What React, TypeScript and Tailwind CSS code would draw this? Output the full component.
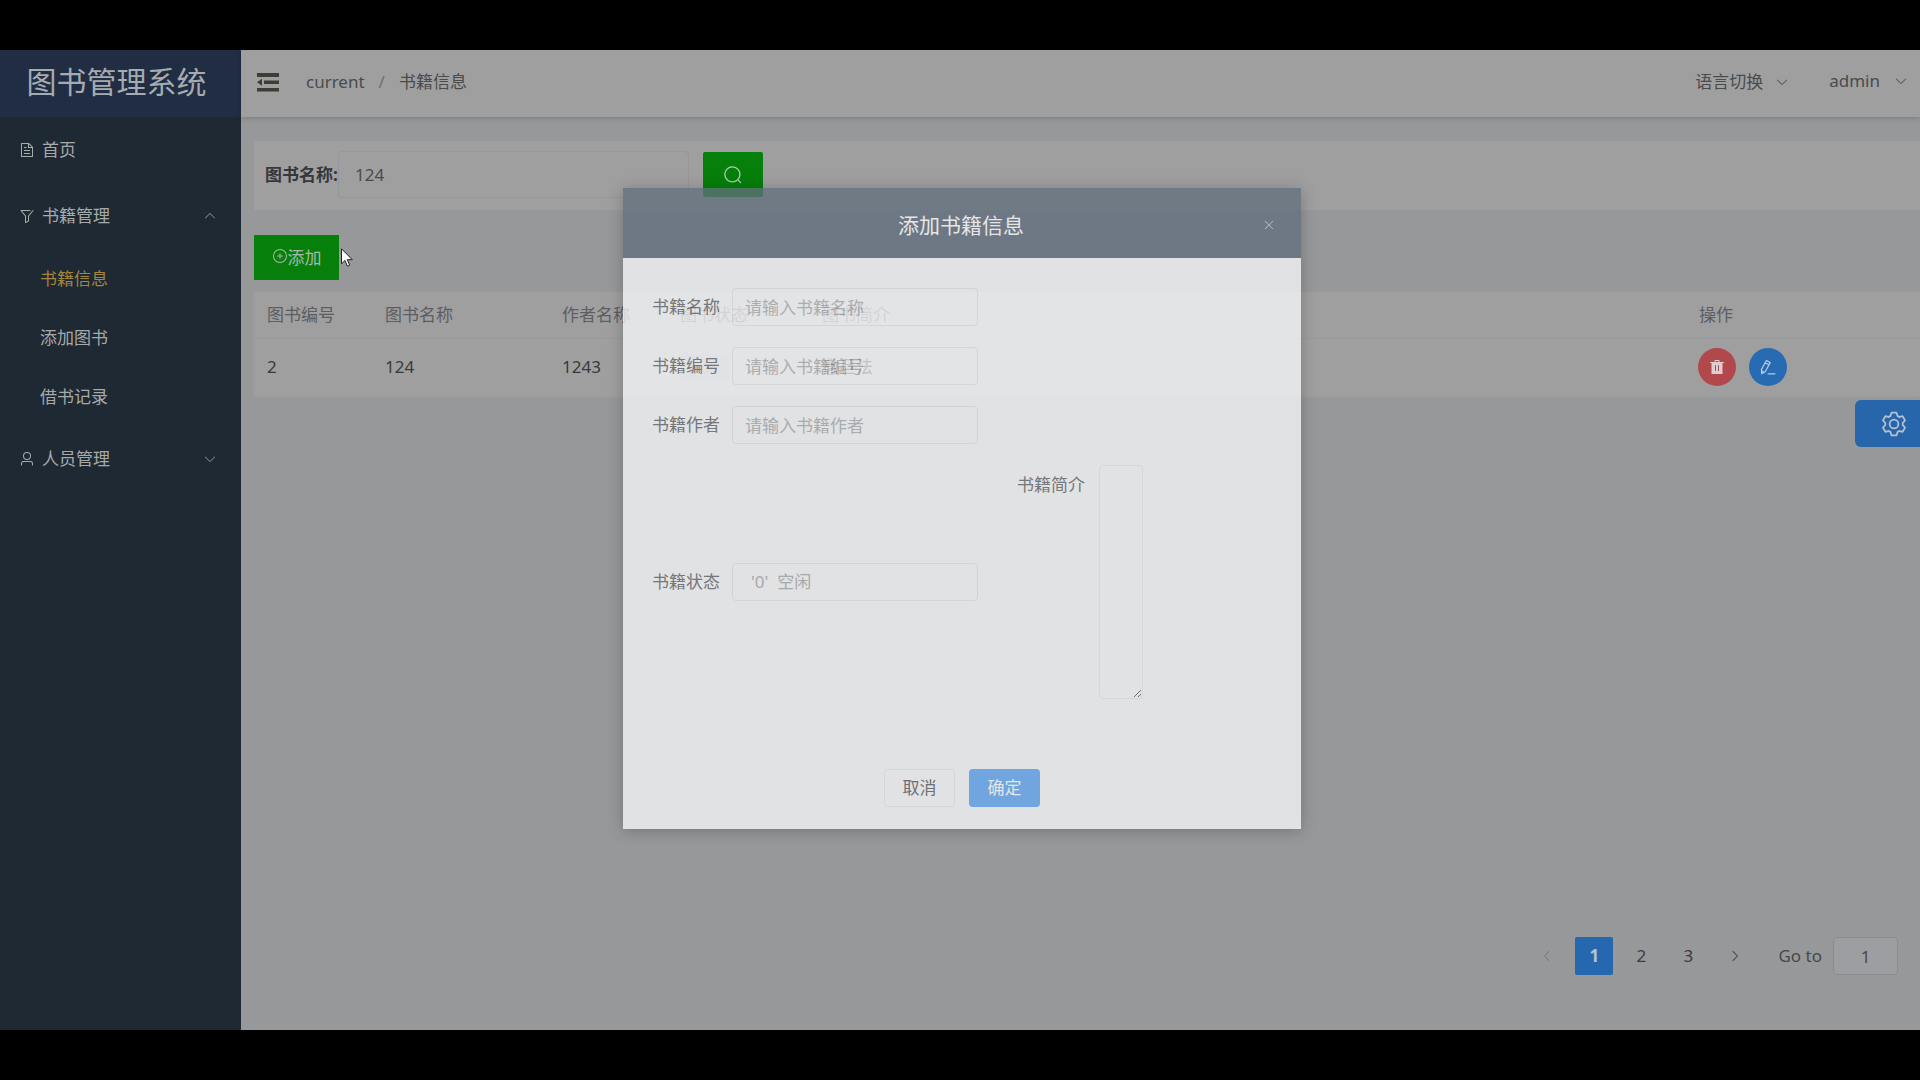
import type { ReactNode } from "react";

const FONT = "font-['Noto_Sans','Noto_Sans_CJK_SC',sans-serif]";

function Glyph({ d, className }: { d: string; className: string }) {
  return (
    <svg viewBox="0 0 1024 1024" fill="currentColor" className={className} aria-hidden="true">
      <path d={d} />
    </svg>
  );
}

const ICONS = {
  search:
    "m795.904 750.72 124.992 124.928a32 32 0 0 1-45.248 45.248L750.656 795.904a416 416 0 1 1 45.248-45.248zM480 832a352 352 0 1 0 0-704 352 352 0 0 0 0 704z",
  down: "M831.872 340.864 512 652.672 192.128 340.864a30.592 30.592 0 0 0-42.752 0 29.12 29.12 0 0 0 0 41.6L489.664 714.24a32 32 0 0 0 44.672 0l340.288-331.712a29.12 29.12 0 0 0 0-41.728 30.592 30.592 0 0 0-42.752 0z",
  document:
    "M832 384H576V128H192v768h640V384zm-26.496-64L640 154.496V320h165.504zM160 64h480l256 256v608a32 32 0 0 1-32 32H160a32 32 0 0 1-32-32V96a32 32 0 0 1 32-32zm160 448h384v64H320v-64zm0-192h160v64H320v-64zm0 384h384v64H320v-64z",
  filter:
    "M384 523.392V928a32 32 0 0 0 46.336 28.608l192-96A32 32 0 0 0 640 832V523.392l280.768-343.104a32 32 0 1 0-49.536-40.576l-288 352A32 32 0 0 0 576 512v300.224l-128 64V512a32 32 0 0 0-7.232-20.288L195.52 192H704a32 32 0 1 0 0-64H128a32 32 0 0 0-24.768 52.288L384 523.392z",
  user: "M512 512a192 192 0 1 0 0-384 192 192 0 0 0 0 384zm0 64a256 256 0 1 1 0-512 256 256 0 0 1 0 512zm320 320v-96a96 96 0 0 0-96-96H288a96 96 0 0 0-96 96v96a32 32 0 1 1-64 0v-96a160 160 0 0 1 160-160h448a160 160 0 0 1 160 160v96a32 32 0 1 1-64 0z",
  setting:
    "M600.704 64a32 32 0 0 1 30.464 22.208l35.2 109.376c14.784 7.232 28.928 15.36 42.432 24.512l112.384-24.192a32 32 0 0 1 34.432 15.36L944.32 364.8a32 32 0 0 1-4.032 37.504l-77.12 85.12a357.12 357.12 0 0 1 0 49.024l77.12 85.248a32 32 0 0 1 4.032 37.504l-88.704 153.6a32 32 0 0 1-34.432 15.296L708.8 803.904c-13.44 9.088-27.648 17.28-42.368 24.512l-35.264 109.376A32 32 0 0 1 600.704 960H423.296a32 32 0 0 1-30.464-22.208L357.696 828.48a351.616 351.616 0 0 1-42.56-24.64l-112.32 24.256a32 32 0 0 1-34.432-15.36L79.68 659.2a32 32 0 0 1 4.032-37.504l77.12-85.248a357.12 357.12 0 0 1 0-48.896l-77.12-85.248A32 32 0 0 1 79.68 364.8l88.704-153.6a32 32 0 0 1 34.432-15.296l112.32 24.256c13.568-9.152 27.776-17.408 42.56-24.64l35.2-109.312A32 32 0 0 1 423.232 64H600.64zm-23.424 64H446.72l-36.352 113.088-24.512 11.968a294.113 294.113 0 0 0-34.816 20.096l-22.656 15.36-116.224-25.088-65.28 113.152 79.68 88.192-1.92 27.136a293.12 293.12 0 0 0 0 40.192l1.92 27.136-79.808 88.192 65.344 113.152 116.224-25.024 22.656 15.296a294.113 294.113 0 0 0 34.816 20.096l24.512 11.968L446.72 896h130.688l36.48-113.152 24.448-11.904a288.282 288.282 0 0 0 34.752-20.096l22.592-15.296 116.288 25.024 65.28-113.152-79.744-88.192 1.92-27.136a293.12 293.12 0 0 0 0-40.256l-1.92-27.136 79.808-88.128-65.344-113.152-116.288 24.96-22.592-15.232a287.616 287.616 0 0 0-34.752-20.096l-24.448-11.904L577.344 128zM512 320a192 192 0 1 1 0 384 192 192 0 0 1 0-384zm0 64a128 128 0 1 0 0 256 128 128 0 0 0 0-256z",
  plus: "M352 480h320a32 32 0 1 1 0 64H352a32 32 0 0 1 0-64zM480 672V352a32 32 0 1 1 64 0v320a32 32 0 0 1-64 0zM512 896a384 384 0 1 0 0-768 384 384 0 0 0 0 768zm0 64a448 448 0 1 1 0-896 448 448 0 0 1 0 896z",
  trash:
    "M352 192V95.936a32 32 0 0 1 32-32h256a32 32 0 0 1 32 32V192h256a32 32 0 1 1 0 64H96a32 32 0 0 1 0-64h256zm64 0h192v-64H416v64zM192 960a32 32 0 0 1-32-32V256h704v672a32 32 0 0 1-32 32H192zm224-192a32 32 0 0 0 32-32V416a32 32 0 0 0-64 0v320a32 32 0 0 0 32 32zm192 0a32 32 0 0 0 32-32V416a32 32 0 0 0-64 0v320a32 32 0 0 0 32 32z",
  close:
    "M764.288 214.592 512 466.88 259.712 214.592a31.936 31.936 0 0 0-45.12 45.12L466.752 512 214.528 764.224a31.936 31.936 0 1 0 45.12 45.184L512 557.184l252.288 252.288a31.936 31.936 0 0 0 45.12-45.12L557.12 512.064l252.288-252.352a31.936 31.936 0 1 0-45.12-45.184z",
};

function EditIcon() {
  return (
    <svg viewBox="0 0 16 16" fill="none" stroke="currentColor" strokeWidth="1.2" strokeLinejoin="round" strokeLinecap="round" className="size-4" aria-hidden="true">
      <path d="M1.400 10.600 6.400 1.500l3.800 2.100-5 9.100-3.500 2.100z M5.200 3.700l3.800 2.100 M1.500 11.400l2.400 2.100 M8 14.800h7" />
    </svg>
  );
}

function MenuItem({ icon, label, arrow }: { icon: string; label: string; arrow?: "up" | "down" }) {
  return (
    <button type="button" className="flex h-[66px] w-full items-center gap-[7px] pr-6 pl-[19px] text-left text-[#a6aaa9]">
      <Glyph d={icon} className="size-4" />
      <span className="flex-1">{label}</span>
      {arrow === "up" && <Glyph d={ICONS.down} className="size-3.5 rotate-180 text-[#8b9299]" />}
      {arrow === "down" && <Glyph d={ICONS.down} className="size-3.5 text-[#8b9299]" />}
    </button>
  );
}

function SubItem({ label, active }: { label: string; active?: boolean }) {
  return (
    <a href="#" className={active ? "flex h-[59px] items-center pl-10 text-[#a3853b]" : "flex h-[59px] items-center pl-10 text-[#a6aaa9]"}>
      {label}
    </a>
  );
}

function Sidebar() {
  return (
    <aside className="w-[241px] shrink-0 bg-[#1e2934]">
      <h1 className="flex h-[67px] items-center justify-center bg-[#202d43] pr-2 pb-1 text-[30px] text-[#a5abb0]">图书管理系统</h1>
      <nav>
        <MenuItem icon={ICONS.document} label="首页" />
        <MenuItem icon={ICONS.filter} label="书籍管理" arrow="up" />
        <SubItem label="书籍信息" active />
        <SubItem label="添加图书" />
        <SubItem label="借书记录" />
        <MenuItem icon={ICONS.user} label="人员管理" arrow="down" />
      </nav>
    </aside>
  );
}

function TopBar() {
  return (
    <header className="z-10 flex h-[67px] shrink-0 items-center bg-[#9f9fa0] pr-3 pb-1 pl-4 text-[#4a4b4d] shadow-[0_1px_5px_rgba(0,0,0,0.2)]">
      <button type="button" aria-label="折叠菜单" className="text-[#3c3d35]">
        <svg viewBox="0 0 22 20" fill="currentColor" className="h-5 w-[22px]" aria-hidden="true">
          <path d="M0 1h22v4H0z M7 8.500h15v3.500H7z M0 16h22v3.500H0z M0 10.200l5-3.500v7z" />
        </svg>
      </button>
      <nav className="ml-[27px] flex flex-1 items-center">
        <a href="#">current</a>
        <span className="mx-3.5 text-[#6d6f74]">/</span>
        <span>书籍信息</span>
      </nav>
      <button type="button" className="flex items-center gap-3">
        语言切换
        <Glyph d={ICONS.down} className="size-3.5" />
      </button>
      <button type="button" className="ml-10 flex items-center gap-3.5 pb-0.5">
        admin
        <Glyph d={ICONS.down} className="size-3.5" />
      </button>
    </header>
  );
}

function BookTable() {
  return (
    <table className="w-full table-fixed border-collapse bg-[#9f9fa0] text-left shadow-[0_1px_4px_rgba(255,255,255,0.06)]">
      <colgroup>
        <col className="w-[118px]" />
        <col className="w-[177px]" />
        <col className="w-[118px]" />
        <col className="w-[142px]" />
        <col />
        <col className="w-[234px]" />
      </colgroup>
      <thead>
        <tr className="h-[46px] border-b border-[#999a9b] text-[#5b5d60]">
          {["图书编号", "图书名称", "作者名称", "图书状态", "图书简介", "操作"].map((h) => (
            <th key={h} scope="col" className="px-[13px] font-normal">{h}</th>
          ))}
        </tr>
      </thead>
      <tbody>
        <tr className="h-[58px] text-[#38393b]">
          <td className="px-[13px]">2</td>
          <td className="px-[13px]">124</td>
          <td className="px-[13px]">1243</td>
          <td className="px-[13px]">
            <span className="rounded bg-[#959aa0] px-3 py-1 text-sm text-[#7d858e]">null</span>
          </td>
          <td className="px-[13px] text-[#151617]">撒旦法</td>
          <td className="px-3">
            <div className="flex gap-[13px]">
              <button type="button" aria-label="删除" className="flex size-[38px] items-center justify-center rounded-full bg-[#b2484b] text-[#dccdce]">
                <Glyph d={ICONS.trash} className="size-4" />
              </button>
              <button type="button" aria-label="编辑" className="flex size-[38px] items-center justify-center rounded-full bg-[#276bb3] text-[#b7c9dc]">
                <EditIcon />
              </button>
            </div>
          </td>
        </tr>
      </tbody>
    </table>
  );
}

function Pagination() {
  return (
    <nav className="mt-auto mr-[22px] mb-[55px] flex items-center justify-end text-[#3b3c3f]">
      <button type="button" aria-label="上一页" className="flex size-[38px] items-center justify-center text-[#77797c]">
        <Glyph d={ICONS.down} className="size-3.5 rotate-90" />
      </button>
      <button type="button" className="mx-[9px] size-[38px] rounded-xs bg-[#2668b0] font-bold text-[#b5c3d2]">1</button>
      <button type="button" className="size-[38px]">2</button>
      <button type="button" className="mx-[9px] size-[38px]">3</button>
      <button type="button" aria-label="下一页" className="flex size-[38px] items-center justify-center">
        <Glyph d={ICONS.down} className="size-3.5 -rotate-90" />
      </button>
      <label htmlFor="goto" className="mr-[11px] ml-6 text-[#47484b]">Go to</label>
      <input id="goto" defaultValue="1" className="h-[38px] w-[65px] rounded border border-[#898b8f] bg-[#9d9ea1] text-center text-[#47484b]" />
    </nav>
  );
}

function Field({ id, label, children }: { id: string; label: string; children: ReactNode }) {
  return (
    <div className="flex items-center">
      <label htmlFor={id} className="w-[80px] text-[#6a6c70]">{label}</label>
      {children}
    </div>
  );
}

const INPUT = "h-[38px] w-[246px] rounded border border-[#e6e7e9] bg-transparent px-3 placeholder-[#b0b2b5]";

function BookDialog() {
  return (
    <div className="absolute inset-x-0 top-[188px] flex justify-center pl-1">
      <section role="dialog" aria-labelledby="dialog-title" className="w-[678px] opacity-75 shadow-[0_2px_14px_rgba(0,0,0,0.3)]">
        <header className="flex h-[70px] items-center bg-[#606e7d] px-[25px] pt-1">
          <h2 id="dialog-title" className="flex-1 pl-3 text-center text-[21px] text-white">添加书籍信息</h2>
          <button type="button" aria-label="关闭" className="text-[#c3c8cf]">
            <Glyph d={ICONS.close} className="size-3.5" />
          </button>
        </header>
        <form className="bg-[#fafbfc] px-[29px] pt-[30px] pb-[22px]">
          <div className="flex flex-col gap-[21px]">
            <Field id="book-name" label="书籍名称">
              <input id="book-name" placeholder="请输入书籍名称" className={INPUT} />
            </Field>
            <Field id="book-no" label="书籍编号">
              <input id="book-no" placeholder="请输入书籍编号" className={INPUT} />
            </Field>
            <Field id="book-author" label="书籍作者">
              <input id="book-author" placeholder="请输入书籍作者" className={INPUT} />
            </Field>
            <div className="flex items-center">
              <Field id="book-state" label="书籍状态">
                <select id="book-state" className="h-[38px] w-[246px] appearance-none rounded border border-[#e6e7e9] bg-transparent px-[18px] text-[#acaeb1]">
                  <option>'0'&nbsp; 空闲</option>
                </select>
              </Field>
              <div className="ml-[39px] flex items-start">
                <label htmlFor="book-intro" className="w-[82px] pt-2 text-[#6a6c70]">书籍简介</label>
                <textarea id="book-intro" className="h-[234px] w-[44px] resize rounded border border-[#ebecee] bg-transparent" />
              </div>
            </div>
          </div>
          <div className="mt-[70px] flex justify-center gap-3.5">
            <button type="button" className="h-[38px] w-[71px] rounded border border-[#e9eaec] text-[#606266]">取消</button>
            <button type="button" className="h-[38px] w-[71px] rounded bg-[#64aaf6] text-white">确定</button>
          </div>
        </form>
      </section>
    </div>
  );
}

export default function App() {
  return (
    <div className={`relative flex min-h-screen flex-col overflow-hidden bg-black py-[50px] text-[17px] leading-6 ${FONT}`}>
      <div className="flex flex-1">
        <Sidebar />
        <main className="flex min-w-0 flex-1 flex-col bg-[#97989a]">
          <TopBar />
          <div className="flex flex-1 flex-col pt-6 pl-[13px]">
            <form className="flex h-[69px] items-center bg-[#9f9fa0] pb-0.5 pl-[11px]">
              <label htmlFor="search" className="w-[73px] font-bold text-[#36373a]">图书名称:</label>
              <input id="search" defaultValue="124" className="h-[47px] w-[351px] rounded border border-[#96979a] bg-transparent px-4 text-[#4a4b4d]" />
              <button type="button" aria-label="搜索" className="ml-3.5 flex h-[45px] w-[60px] items-center justify-center rounded-xs bg-[#067f0b] text-[#a9cfaa]">
                <Glyph d={ICONS.search} className="size-5" />
              </button>
            </form>
            <button type="button" className="mt-[25px] mb-3 flex h-[45px] w-[85px] items-center justify-center bg-[#067f0b] text-[#a9b8a9]">
              <Glyph d={ICONS.plus} className="mb-1 size-4" />
              添加
            </button>
            <BookTable />
            <Pagination />
          </div>
        </main>
      </div>
      <button type="button" aria-label="设置" className="absolute top-[400px] right-0 flex h-[47px] w-[65px] items-center justify-center rounded-l-md bg-[#2866ab] pl-3 text-[#b3c1d0]">
        <Glyph d={ICONS.setting} className="size-7" />
      </button>
      <BookDialog />
      <svg viewBox="0 0 12 19" className="absolute top-[248px] left-[341px] h-[19px] w-3" aria-hidden="true">
        <path d="M.5.8v15l3.500-3.300 2.400 5.700 2.300-1-2.400-5.500h5z" fill="white" stroke="#222" strokeWidth="1" />
      </svg>
    </div>
  );
}
